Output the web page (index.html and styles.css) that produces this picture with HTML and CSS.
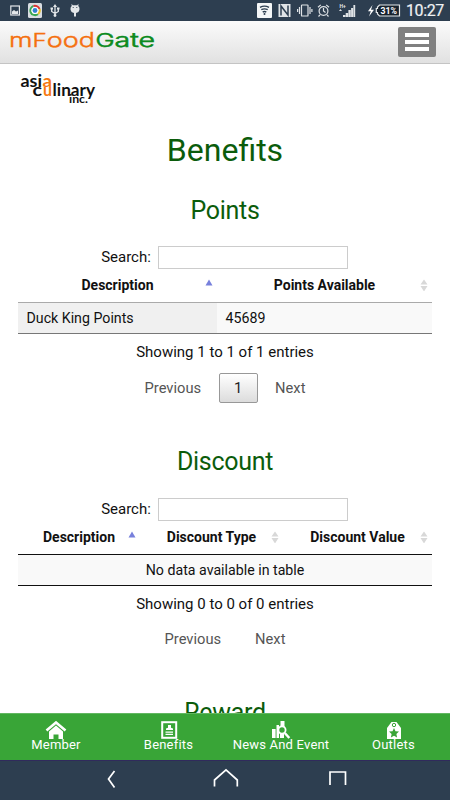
FILE: index.html
```html
<!DOCTYPE html>
<html lang="en">
<head>
<meta charset="utf-8">
<title>mFoodGate - Benefits</title>
<link rel="stylesheet" href="styles.css">
</head>
<body>
<div class="status">
  <svg class="status-icons" width="90" height="21" viewBox="0 0 90 21">
    <rect x="10.8" y="6" width="8.6" height="9" fill="none" stroke="#e4e7ea" stroke-width="1.2"/>
    <path d="M12 14v-2.500l2-1.500 2 1.500 2-1v3.500z" fill="#e4e7ea"/>
    <rect x="28" y="3" width="14" height="15" rx="1.500" fill="#d9dde2"/>
    <g fill="none" stroke-width="2"><path d="M30.500 12a5 5 0 0 1 3-6" stroke="#39a852"/><path d="M33.500 6a5 5 0 0 1 6 3" stroke="#d33"/><path d="M39.700 9a5 5 0 0 1-1.700 5" stroke="#e9c02a"/><path d="M38 14.200a5 5 0 0 1-7.500-2.200" stroke="#39a852"/></g>
    <circle cx="35" cy="10.500" r="3.500" fill="#fff"/><circle cx="35" cy="10.500" r="2.400" fill="#3181d4"/>
    <g fill="none" stroke="#e4e7ea" stroke-width="1.300"><path d="M55 6v10M51.700 8v3.500l3.300 2 3.300-2V8"/></g>
    <path d="M53 7l2-3 2 3zM50.500 7.500h2.500v2h-2.500zM57 7.500h2.500v2H57z" fill="#e4e7ea"/><circle cx="55" cy="15.500" r="1.400" fill="#e4e7ea"/>
    <path d="M71.500 3.800l1.300 1.400h4.400l1.300-1.400-.2 2.200q1.500 1.300 1.200 3.500-.5 3-3.500 3.500v3.500h-2V13q-3-.5-3.500-3.500-.3-2.200 1.200-3.500z" fill="#e4e7ea"/>
    <circle cx="73.200" cy="7.500" r=".6" fill="#2d3e50"/><circle cx="76.800" cy="7.500" r=".6" fill="#2d3e50"/>
  </svg>
  <svg class="status-right" width="150" height="21" viewBox="255 0 150 21">
    <rect x="257" y="3" width="15" height="15" rx="1" fill="#f4f6f7"/>
    <g fill="none" stroke="#2d3e50" stroke-width="1.400"><path d="M260 7.300q4.500-2.300 9 0M261.300 9.700q3.200-1.600 6.400 0M262.700 12q1.800-.9 3.600 0"/></g><circle cx="264.500" cy="14" r="1" fill="#2d3e50"/>
    <path d="M278.500 4h12v13h-12z" fill="#dfe3e6"/><path d="M281 15.500V6l7 9V5.500" fill="none" stroke="#2d3e50" stroke-width="1.500"/>
    <g fill="none" stroke="#dfe3e6" stroke-width="1.200"><rect x="301.500" y="5" width="6.500" height="11" rx=".6"/><path d="M299.500 7v7M310 7v7M297.600 9v3M311.900 9v3"/><circle cx="323.500" cy="11" r="4.400"/><path d="M323.500 8v3l2 1.500M318 7.200l2.800-2.300M329 7.200l-2.800-2.300M320 14.800l-1.500 1.700M327 14.800l1.500 1.700"/></g>
    <text x="339.500" y="7.500" class="hplus">H+</text><path d="M339 11l1.500-2 1.500 2z" fill="#dfe3e6"/>
    <path d="M343 17v-2h2.400v2zM345.700 17v-4h2.400v4zM348.400 17v-7h2.400v7zM351.100 17V8h2v9zM353.400 17V5h1.800v12z" fill="#dfe3e6"/>
    <path d="M372.500 5l-4.500 6.300h2.800L369 16.500l5-6.800h-3z" fill="#fff"/>
    <path d="M379.500 5h20v11h-20l-2-2v-1.500h-1.200v-4h1.200V7z" fill="#17222d" stroke="#e4e7ea" stroke-width="1.200"/>
    <text x="380.500" y="13.700" class="battery" textLength="16.500" lengthAdjust="spacingAndGlyphs">31%</text>
  </svg>
  <span class="clock">10:27</span>
</div>
<header class="header">
  <svg class="brand" width="150" height="26" viewBox="0 0 150 26">
    <text x="0" y="18.500" class="brand-a" textLength="86" lengthAdjust="spacingAndGlyphs">m<tspan class="cap">F</tspan>ood</text>
    <text x="86.500" y="18.500" class="brand-b" textLength="59.500" lengthAdjust="spacingAndGlyphs"><tspan class="cap">G</tspan>ate</text>
  </svg>
  <div class="menu"><i></i><i></i><i></i></div>
</header>
<main class="content">
  <svg class="company" width="80" height="36" viewBox="0 0 80 36">
    <text x="0.500" y="14.500" textLength="21.500" lengthAdjust="spacingAndGlyphs">asi</text>
    <text x="22.500" y="14.500" class="hot" textLength="9.500" lengthAdjust="spacingAndGlyphs">a</text>
    <text x="12.500" y="24" textLength="9.500" lengthAdjust="spacingAndGlyphs">c</text>
    <text x="23" y="24" class="hot" textLength="9" lengthAdjust="spacingAndGlyphs">u</text>
    <text x="32.500" y="24" textLength="42.500" lengthAdjust="spacingAndGlyphs">linary</text>
    <text x="49" y="31" class="inc" textLength="19" lengthAdjust="spacingAndGlyphs">inc.</text>
  </svg>
  <h1>Benefits</h1>
  <section class="block">
    <h2 class="points">Points</h2>
    <label class="search"><span>Search:</span><input type="text"></label>
    <div class="table two light">
      <div class="th">Description<svg class="sort" viewBox="0 0 8 12"><path d="M.5 6.500L4 .5l3.500 6z" fill="#7780dc"/></svg></div>
      <div class="th">Points Available<svg class="sort" viewBox="0 0 8 12"><path d="M.5 5.500L4 .5l3.500 5zM.5 7L4 12.500 7.500 7z" fill="#d8d8d8"/></svg></div>
      <div class="td sorted">Duck King Points</div>
      <div class="td">45689</div>
    </div>
    <p class="info">Showing 1 to 1 of 1 entries</p>
    <div class="pager"><span>Previous</span><button>1</button><span>Next</span></div>
  </section>
  <section class="block">
    <h2 class="discount">Discount</h2>
    <label class="search"><span>Search:</span><input type="text"></label>
    <div class="table three">
      <div class="th">Description<svg class="sort" viewBox="0 0 8 12"><path d="M.5 6.500L4 .5l3.500 6z" fill="#7780dc"/></svg></div>
      <div class="th">Discount Type<svg class="sort" viewBox="0 0 8 12"><path d="M.5 5.500L4 .5l3.500 5zM.5 7L4 12.500 7.500 7z" fill="#d8d8d8"/></svg></div>
      <div class="th">Discount Value<svg class="sort" viewBox="0 0 8 12"><path d="M.5 5.500L4 .5l3.500 5zM.5 7L4 12.500 7.500 7z" fill="#d8d8d8"/></svg></div>
      <div class="td empty">No data available in table</div>
    </div>
    <p class="info">Showing 0 to 0 of 0 entries</p>
    <div class="pager bare"><span>Previous</span><span>Next</span></div>
  </section>
  <h2 class="reward">Reward</h2>
</main>
<nav class="tabs">
  <a class="member"><svg width="22" height="18" viewBox="0 0 22 18"><path d="M1.500 9.500L11 1.500l9.500 8" fill="none" stroke="#fff" stroke-width="2.600"/><path d="M4 10.500l7-6 7 6V18h-4.500v-4.500h-5V18H4z" fill="#fff"/></svg><span>Member</span></a>
  <a class="benefits"><svg width="22" height="18" viewBox="0 0 22 18"><rect x="4.200" y="1.200" width="14" height="15.600" fill="none" stroke="#fff" stroke-width="2"/><path d="M8 9V7.500l2-.7V4h3v2.800l2 .7V9zM7.500 10.500H15v1.200H7.500zM7.500 12.800H15V14H7.500z" fill="#fff"/></svg><span>Benefits</span></a>
  <a class="news"><svg width="22" height="18" viewBox="0 0 22 18"><path d="M2 8h3.600v9H2zM6.500 4H9v13H6.500zM10.500 0h4v6h-4zM10 13h4v4h-4z" fill="#fff"/><circle cx="12" cy="9" r="3.600" fill="#39a537" stroke="#fff" stroke-width="1.800"/><path d="M14.800 12l4.500 5" stroke="#fff" stroke-width="2.500"/></svg><span>News And Event</span></a>
  <a class="outlets"><svg width="22" height="18" viewBox="0 0 22 18"><path d="M4 18V7l4.500-6h5L18 7v11z" fill="#fff"/><circle cx="11" cy="4" r="1.700" fill="#fff" stroke="#39a537"/><path d="M11 7l1.500 3.200 3.500.4-2.600 2.300.7 3.500-3.100-1.700-3.100 1.700.7-3.500L6 10.600l3.500-.4z" fill="#39a537"/></svg><span>Outlets</span></a>
</nav>
<div class="system">
  <svg width="450" height="39" viewBox="0 0 450 39" fill="none" stroke="#fff" stroke-width="1.700"><path d="M114.500 10l-6 8 6 8.500"/><path d="M214.500 25.500V19L226 8.800 237.300 19v6.500"/><path d="M330 24V11h15.500v13"/></svg>
</div>
</body>
</html>
```
FILE: styles.css
```css
* { box-sizing: border-box; }
body {
  margin: 0;
  width: 450px;
  height: 800px;
  overflow: hidden;
  display: flex;
  flex-direction: column;
  background: #fff;
  color: #111;
  font: 15px/20px Roboto, "Liberation Sans", sans-serif;
}
svg { display: block; flex: none; }
h1, h2, p { margin: 0; font-weight: 400; text-align: center; }

.status { height: 21px; flex: none; display: flex; align-items: center; background: #2d3e50; color: #f0f2f4; }
.status-right { margin-left: auto; }
.clock { width: 45px; padding-left: 1px; font-size: 16px; line-height: 21px; letter-spacing: -.4px; -webkit-text-stroke: .2px #f0f2f4; }
.hplus { font: 700 5px Roboto, sans-serif; fill: #e4e7ea; }
.battery { font: 700 9px Roboto, sans-serif; fill: #fff; }

.header {
  height: 43px; flex: none; display: flex; justify-content: space-between; align-items: center;
  padding: 0 14px 1px 9px;
  background: linear-gradient(#fbfbfb, #e1e1e1);
  border-bottom: 1px solid #c4c4c4;
}
.brand { margin-top: -1px; }
.brand-a, .brand-b { font: 300 20px Inter, sans-serif; }
.brand .cap { font-size: 18px; }
.brand-a { fill: #f5700f; stroke: #f5700f; stroke-width: .4px; }
.brand-b { fill: #0c8a20; stroke: #0c8a20; stroke-width: .6px; }
.menu { width: 38px; height: 30px; margin-top: 1px; border-radius: 2px; background: #808080; padding: 6px 7px; display: flex; flex-direction: column; gap: 3px; }
.menu i { height: 4px; background: #fff; }

.content { flex: 1; min-height: 0; overflow: hidden; display: flex; flex-direction: column; }
.company { margin: 8px 0 0 20px; }
.company text { font: 700 17px Lato, sans-serif; fill: #111; }
.company .hot { fill: #f57a12; }
.company .inc { font-size: 12px; }
h1 { margin-top: 22px; font-size: 32px; line-height: 40px; color: #0b5c0b; }
h2 { font-size: 25px; line-height: 32px; letter-spacing: -.3px; color: #0b5c0b; }
.points { margin-top: 25px; }
.reward { margin-top: 43px; }
.discount { margin-top: 43px; }

.search { display: flex; justify-content: center; align-items: center; gap: 7px; margin: 19px 1px 0 0; height: 23px; }
.search span { margin-top: -2px; }
.discount + .search { margin-top: 20px; }
.search input { width: 190px; height: 23px; border: 1px solid #ccc; background: #fff; padding: 0; }
.table { display: grid; width: 414px; margin: 0 auto; }
.two { grid-template-columns: 199px 215px; }
.three { grid-template-columns: 122px 143px 149px; }
.th {
  height: 34px; position: relative; font-size: 14px; font-weight: 700; line-height: 32px;
  text-align: center; border-bottom: 1px solid #111;
}
.light .th { border-color: #aaa; }
.sort { position: absolute; right: 4px; top: 10px; width: 8px; height: 12px; }
.td { height: 31px; padding-left: 8.500px; line-height: 30px; font-size: 14.200px; background: #f9f9f9; border-bottom: 1px solid #111; }
.light .td { border-color: #777; }
.sorted { background: #f0f0f0; }
.empty { grid-column: 1 / -1; text-align: center; padding: 0; }
.info { margin-top: 8px; }
.pager { display: flex; justify-content: center; align-items: center; height: 30px; margin-top: 11px; color: #555; font-size: 14.700px; }
.pager button {
  width: 39px; height: 30px; margin: 0 17.500px; padding: 0; font: inherit; color: #222;
  border: 1px solid #989898; border-radius: 2px; background: linear-gradient(#fff, #dcdcdc);
}
.bare { gap: 34px; margin-top: 10px; }

.tabs { height: 47px; flex: none; display: grid; grid-template-columns: 112px 113px 112px 113px; background: #39a537; color: #fff; font-size: 13px; line-height: 15px; border-top: 1px solid #62b761; }
.tabs a { display: flex; flex-direction: column; align-items: center; padding-top: 7px; }
.tabs span { margin-top: -2px; letter-spacing: .2px; }
.system { height: 40px; flex: none; background: #2d3e50; border-top: 1px solid #302a5c; }
```
